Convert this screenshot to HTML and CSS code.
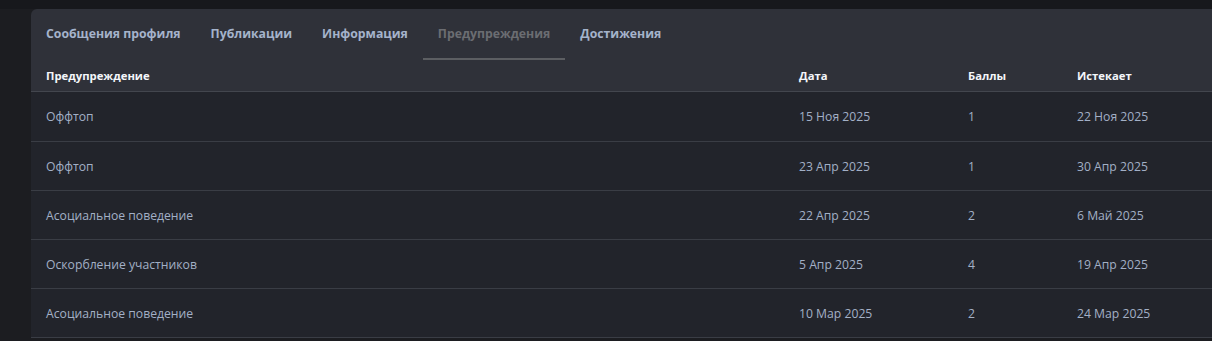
FILE: index.html
```html
<!DOCTYPE html>
<html lang="ru">
    <head>
        <meta charset="utf-8">
        <link rel="stylesheet" href="styles.css">
    </head>
    <body>
        <div class="page">
            <div class="block">
                <ul class="tabs">
                    <li><a href="#">Сообщения профиля</a></li>
                    <li><a href="#">Публикации</a></li>
                    <li><a href="#">Информация</a></li>
                    <li class="current"><a href="#">Предупреждения</a></li>
                    <li><a href="#">Достижения</a></li>
                </ul>

                <div class="warnings">
                    <div class="row head">
                        <div>Предупреждение</div>
                        <div>Дата</div>
                        <div>Баллы</div>
                        <div>Истекает</div>
                    </div>
                    <div class="row">
                        <div>Оффтоп</div>
                        <div>15 Ноя 2025</div>
                        <div>1</div>
                        <div>22 Ноя 2025</div>
                    </div>
                    <div class="row">
                        <div>Оффтоп</div>
                        <div>23 Апр 2025</div>
                        <div>1</div>
                        <div>30 Апр 2025</div>
                    </div>
                    <div class="row">
                        <div>Асоциальное поведение</div>
                        <div>22 Апр 2025</div>
                        <div>2</div>
                        <div>6 Май 2025</div>
                    </div>
                    <div class="row">
                        <div>Оскорбление участников</div>
                        <div>5 Апр 2025</div>
                        <div>4</div>
                        <div>19 Апр 2025</div>
                    </div>
                    <div class="row">
                        <div>Асоциальное поведение</div>
                        <div>10 Мар 2025</div>
                        <div>2</div>
                        <div>24 Мар 2025</div>
                    </div>
                </div>
            </div>
        </div>
    </body>
</html>
```

FILE: styles.css
```css
*{
    margin:0;
    padding:0;
    box-sizing: border-box;
}
body{
    background-color: #1c1d21;
    font-family: "Open Sans", "Liberation Sans", sans-serif;
    font-size: 12.2px;
    overflow: hidden;
}
.page{
    padding-left: 31px;
    background-color: #1c1d21;
    border-top: 9px solid #17181c;
}
.block{
    width: 1240px;
    background-color: #2f3139;
    border-radius: 6px 0 0 0;
    overflow: hidden;
}

/* вкладки */
.tabs{
    list-style: none;
    display: flex;
    height: 51px;
}
.tabs li a{
    display: block;
    height: 51px;
    padding: 0 15px;
    line-height: 50px;
    font-size: 12.25px;
    font-weight: bold;
    color: #a5b3cb;
    text-decoration: none;
    border-bottom: 2px solid transparent;
}
.tabs li.current a{
    color: #6b6d72;
    border-bottom-color: #5c5e62;
}

/* таблица */
.warnings{
    background-color: #22242b;
}
.row{
    display: grid;
    grid-template-columns: 753px 169px 109px 1fr;
    height: 49px;
    align-items: center;
    border-bottom: 1px solid #3a3d45;
    color: #a3b0c6;
}
.row div{
    padding: 0 15px;
}
.row.head{
    height: 32px;
    background-color: #2f3139;
    color: #f4f6fa;
    font-size: 11.3px;
    font-weight: bold;
    border-bottom-color: #43464e;
}
.row.head + .row{
    height: 50px;
    padding-bottom: 1px;
}
```
